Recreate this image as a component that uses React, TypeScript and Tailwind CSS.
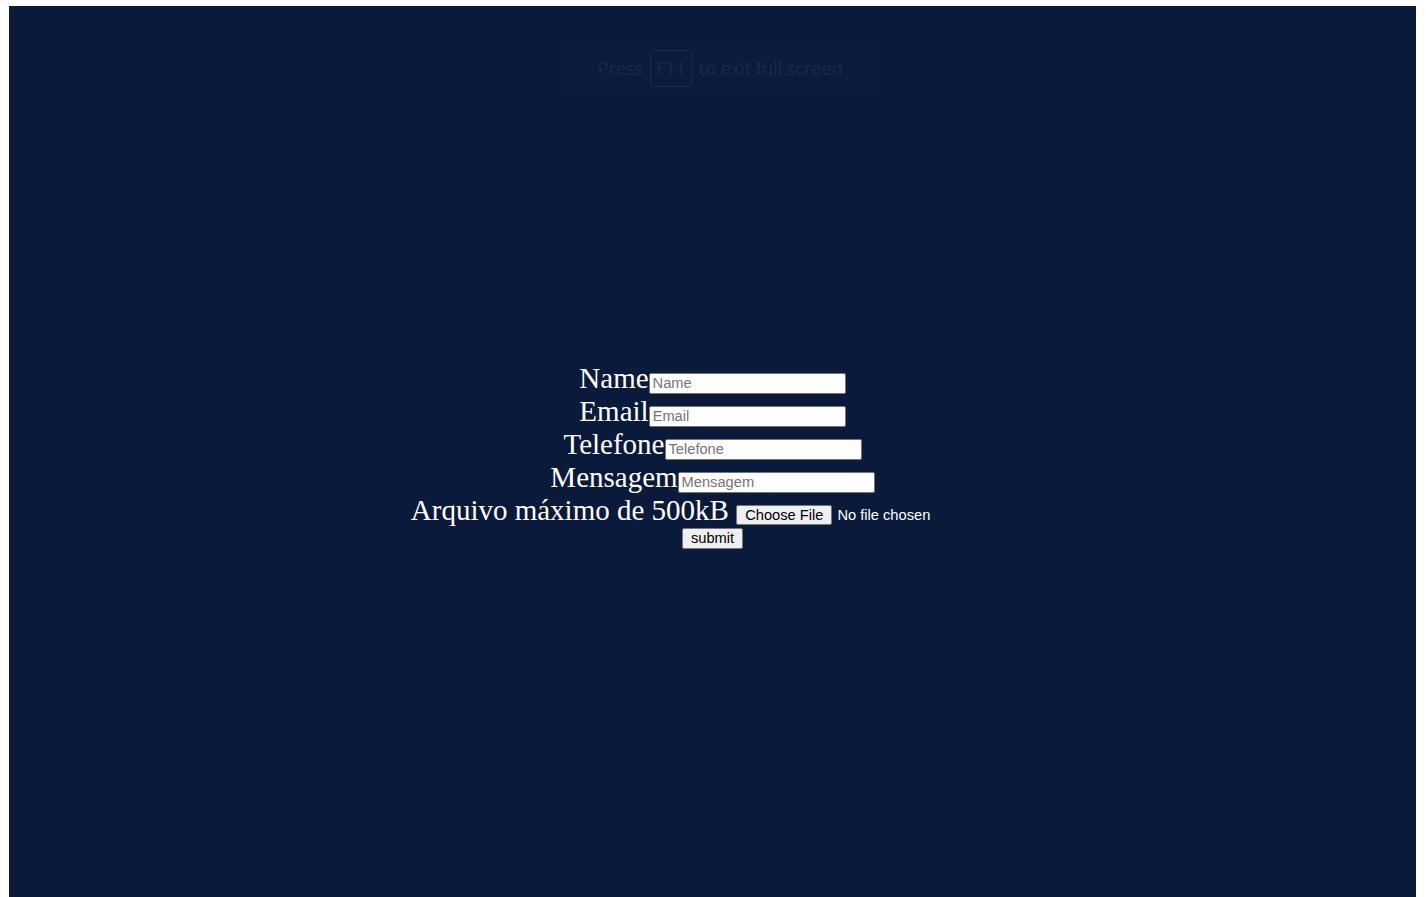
import React from 'react';

const fields = [
  { label: 'Name', type: 'text' },
  { label: 'Email', type: 'email' },
  { label: 'Telefone', type: 'tel' },
  { label: 'Mensagem', type: 'text' },
];

function App() {
  return (
    <div className="min-h-screen bg-white pl-[9px] pr-[10px] pt-[6px]">
      <div className="relative h-[891px] bg-[#0a1a3b] flex items-center justify-center">
        {/* fullscreen hint overlay */}
        <div className="absolute left-[551px] top-[33px] w-[320px] h-[58px] rounded-md bg-[#0b1b3d] flex items-center justify-center gap-[7px] text-[18px] text-[#1b2a4b] font-['Open_Sans',sans-serif]">
          <span>Press</span>
          <span className="border border-[#1b2a4b] rounded-[3px] px-[5px] h-[37px] flex items-center">F11</span>
          <span>to exit full screen</span>
        </div>

        <form className="text-center text-white font-['Liberation_Serif',serif] text-[29px] leading-[normal] mt-[8px]">
          {fields.map((f) => (
            <div key={f.label}>
              <label>{f.label}</label>
              <input
                type={f.type}
                placeholder={f.label}
                className="w-[197px] h-[21px] bg-white text-black border border-[#767676] rounded-[2px] px-[3px] text-[14.67px] leading-[normal] font-['Liberation_Sans',Arial,sans-serif] placeholder:text-[#757575] align-baseline"
              />
            </div>
          ))}
          <div>
            <label>Arquivo máximo de 500kB </label>
            <input
              type="file"
              className="w-[278px] text-left text-[14.67px] leading-[normal] font-['Liberation_Sans',Arial,sans-serif] text-white file:bg-[#efefef] file:text-black file:border file:border-[#767676] file:rounded-[2px] file:px-[8px] file:py-[1px] file:mr-[5px] align-baseline"
            />
          </div>
          <div className="text-[14.67px] font-['Liberation_Sans',Arial,sans-serif] leading-[22px]">
            <button
              type="button"
              className="bg-[#efefef] text-black border border-[#767676] rounded-[2px] px-[8px] h-[21px] leading-[17px]"
            >
              submit
            </button>
          </div>
        </form>
      </div>
    </div>
  );
}

export default App;
